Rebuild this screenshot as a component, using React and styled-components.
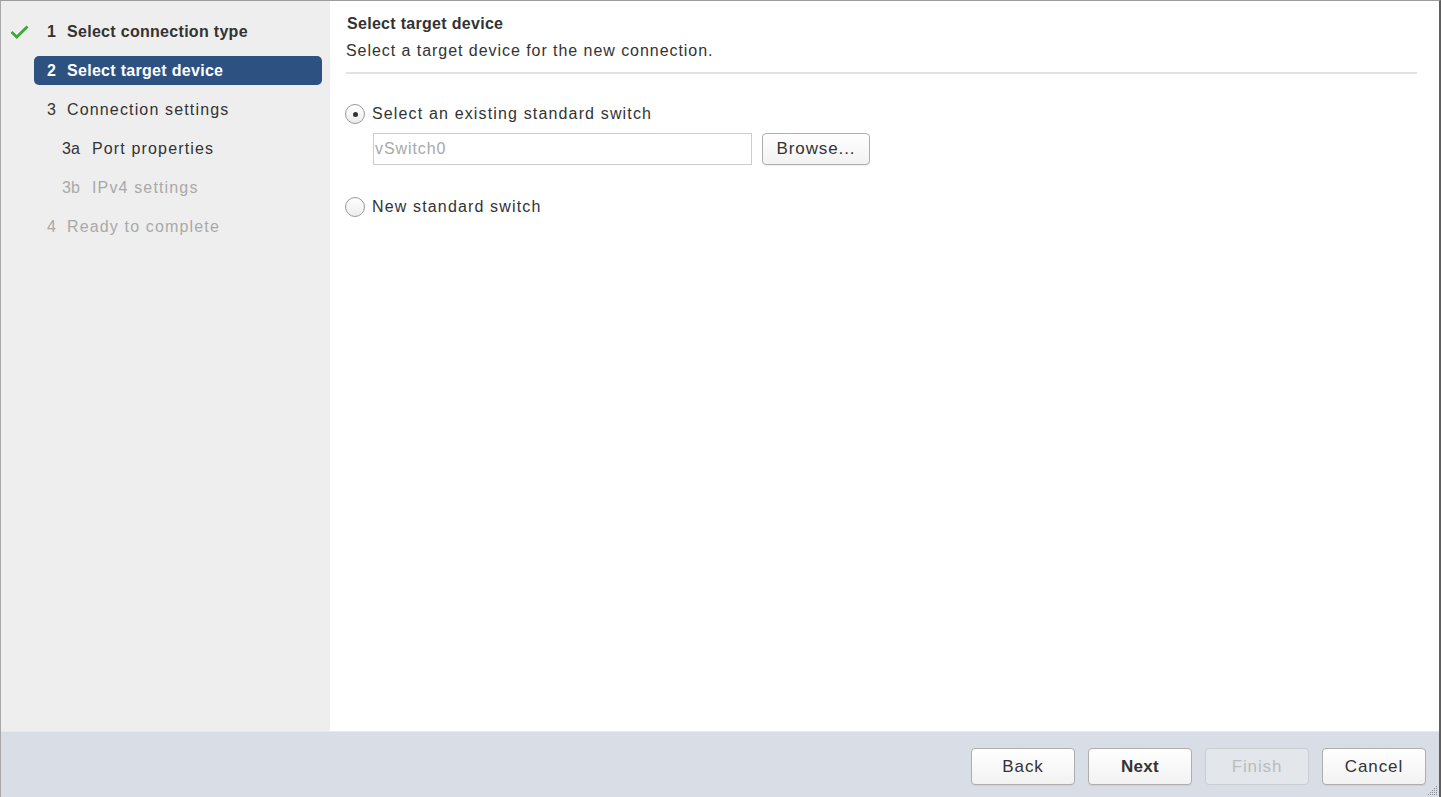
import React from "react";
import styled, { createGlobalStyle } from "styled-components";

const Global = createGlobalStyle`
  html, body { margin: 0; padding: 0; background: #fff; }
  body { font-family: "Liberation Sans", Arial, sans-serif; }
  * { box-sizing: border-box; }
`;

const Window = styled.div`
  width: 1441px;
  height: 797px;
  display: flex;
  flex-direction: column;
  border-top: 1px solid #9c9c9c;
  border-left: 1px solid #a8a8a8;
  border-right: 2px solid #5e5e5e;
  background: #fff;
  position: relative;
`;

const Body = styled.div`
  flex: 1;
  display: flex;
  min-height: 0;
`;

const Sidebar = styled.nav`
  width: 329px;
  flex-shrink: 0;
  background: #eeeeee;
  padding: 16px 8px 0 0;
  display: flex;
  flex-direction: column;
  gap: 10px;
`;

const StepRow = styled.div`
  display: flex;
  align-items: center;
  height: 29px;
`;

const IconCol = styled.div`
  width: 33px;
  flex-shrink: 0;
  display: flex;
  justify-content: center;
  padding-left: 4px;
`;

const StepBox = styled.div`
  flex: 1;
  height: 29px;
  display: flex;
  align-items: center;
  padding-left: ${(p) => (p.$sub ? 28 : 13)}px;
  border-radius: 5px;
  background: ${(p) => (p.$active ? "#2d5282" : "transparent")};
  color: ${(p) => (p.$active ? "#fff" : p.$disabled ? "#a9a9a9" : "#333")};
  font-size: 16px;
  font-weight: ${(p) => (p.$bold ? 700 : 400)};
  letter-spacing: ${(p) => (p.$bold ? 0.3 : 1.15)}px;
  white-space: nowrap;
`;

const StepNum = styled.span`
  display: inline-block;
  letter-spacing: 0;
  width: ${(p) => (p.$sub ? 30 : 20)}px;
`;

const Main = styled.main`
  flex: 1;
  padding: 13px 22px 0 16px;
  display: flex;
  flex-direction: column;
  color: #333;
`;

const Title = styled.h1`
  margin: 0;
  font-size: 16px;
  font-weight: 700;
  line-height: 20px;
  letter-spacing: 0.3px;
  padding-left: 1px;
`;

const Subtitle = styled.p`
  margin: 7px 0 0;
  font-size: 16px;
  line-height: 20px;
  letter-spacing: 0.95px;
  color: #333;
`;

const Divider = styled.hr`
  margin: 11px 0 0;
  border: 0;
  border-top: 2px solid #e2e2e2;
`;

const Options = styled.div`
  margin-top: 29px;
  display: flex;
  flex-direction: column;
`;

const RadioLabel = styled.label`
  display: flex;
  align-items: center;
  gap: 7px;
  font-size: 16px;
  line-height: 20px;
  letter-spacing: 1.15px;
  color: #333;
  height: 22px;
  margin-left: -1px;
  margin-top: ${(p) => p.$mt || 0}px;
`;

const RadioCircle = styled.span`
  width: 20px;
  height: 20px;
  border-radius: 50%;
  border: 1px solid #9a9a9a;
  background: linear-gradient(#ffffff, #ececec);
  display: flex;
  align-items: center;
  justify-content: center;
  flex-shrink: 0;
  &::after {
    content: "";
    width: 5px;
    height: 5px;
    border-radius: 50%;
    background: ${(p) => (p.$checked ? "#333" : "transparent")};
  }
`;

const FieldRow = styled.div`
  display: flex;
  gap: 10px;
  margin: 8px 0 0 27px;
`;

const TextInput = styled.div`
  width: 379px;
  height: 32px;
  border: 1px solid #cccccc;
  background: #fff;
  color: #a8a8a8;
  font-size: 16px;
  letter-spacing: 0.9px;
  display: flex;
  align-items: center;
  padding-left: 1px;
`;

const Button = styled.button`
  font-family: "Liberation Sans", Arial, sans-serif;
  width: ${(p) => p.$w || 104}px;
  height: ${(p) => p.$h || 37}px;
  border-radius: 4px;
  border: 1px solid ${(p) => (p.disabled ? "#c9ccd1" : "#aeaeae")};
  background: ${(p) =>
    p.disabled ? "#e3e6ea" : "linear-gradient(#ffffff, #f2f2f2)"};
  color: ${(p) => (p.disabled ? "#b9bcc0" : "#333")};
  font-size: 17px;
  font-weight: ${(p) => (p.$primary ? 700 : 400)};
  letter-spacing: ${(p) => (p.$primary ? 0.3 : 0.9)}px;
  padding: 0;
  box-shadow: ${(p) => (p.disabled ? "none" : "0 1px 0 rgba(0,0,0,0.06)")};
`;

const Footer = styled.footer`
  height: 66px;
  flex-shrink: 0;
  background: #d9dee6;
  border-top: 1px solid #e6e9ee;
  display: flex;
  justify-content: flex-end;
  align-items: flex-start;
  gap: 13px;
  padding: 16px 13px 0 0;
`;

const Grip = styled.svg`
  position: absolute;
  right: 1px;
  bottom: 1px;
`;

const Check = () => (
  <svg width="19" height="14" viewBox="0 0 19 14">
    <path d="M1.5 7 L6.8 12 L17.5 1.5" fill="none" stroke="#3aa935" strokeWidth="2.8" />
  </svg>
);

const steps = [
  { num: "1", label: "Select connection type", bold: true, done: true },
  { num: "2", label: "Select target device", bold: true, active: true },
  { num: "3", label: "Connection settings", bold: false },
  { num: "3a", label: "Port properties", sub: true },
  { num: "3b", label: "IPv4 settings", sub: true, disabled: true },
  { num: "4", label: "Ready to complete", disabled: true },
];

export default function App() {
  return (
    <>
      <Global />
      <Window>
        <Body>
          <Sidebar>
            {steps.map((s) => (
              <StepRow key={s.num}>
                <IconCol>{s.done && <Check />}</IconCol>
                <StepBox
                  $active={s.active}
                  $bold={s.bold}
                  $sub={s.sub}
                  $disabled={s.disabled}
                >
                  <StepNum $sub={s.sub}>{s.num}</StepNum>
                  {s.label}
                </StepBox>
              </StepRow>
            ))}
          </Sidebar>
          <Main>
            <Title>Select target device</Title>
            <Subtitle>Select a target device for the new connection.</Subtitle>
            <Divider />
            <Options>
              <RadioLabel>
                <RadioCircle $checked />
                Select an existing standard switch
              </RadioLabel>
              <FieldRow>
                <TextInput>vSwitch0</TextInput>
                <Button $w={108} $h={32}>Browse...</Button>
              </FieldRow>
              <RadioLabel $mt={31}>
                <RadioCircle />
                New standard switch
              </RadioLabel>
            </Options>
          </Main>
        </Body>
        <Footer>
          <Button>Back</Button>
          <Button $primary>Next</Button>
          <Button disabled>Finish</Button>
          <Button>Cancel</Button>
        </Footer>
        <Grip width="12" height="12" viewBox="0 0 12 12">
          {[
            [10, 2], [10, 4], [8, 4], [10, 6], [8, 6], [6, 6],
            [10, 8], [8, 8], [6, 8], [4, 8],
            [10, 10], [8, 10], [6, 10], [4, 10], [2, 10],
          ].map(([x, y]) => (
            <rect key={`${x}-${y}`} x={x} y={y} width="1" height="1" fill="#8a8f96" />
          ))}
        </Grip>
      </Window>
    </>
  );
}
